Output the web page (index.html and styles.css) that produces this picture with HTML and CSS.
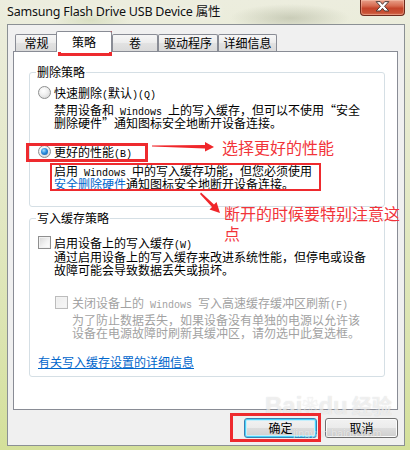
FILE: index.html
```html
<!DOCTYPE html>
<html lang="zh-CN">
<head>
<meta charset="utf-8">
<title>Samsung Flash Drive USB Device 属性</title>
<link rel="stylesheet" href="styles.css">
</head>
<body>
<div class="window">
  <div class="titlebar">
    <span class="title">Samsung Flash Drive USB Device 属性</span>
    <span class="close"><svg width="45" height="15" viewBox="0 0 45 15"><path d="M16.5 2.5 h4.2 l2.3 2.8 l2.3 -2.8 h4.2 l-4.4 4.8 l4.4 4.8 h-4.2 l-2.3 -2.8 l-2.3 2.8 h-4.2 l4.4 -4.8 z" fill="#fff" stroke="#4a3a36" stroke-width="1"/></svg></span>
  </div>
  <div class="client">
    <div class="tabs">
      <div class="tab t1">常规</div>
      <div class="tab sel">策略</div>
      <div class="tab t3">卷</div>
      <div class="tab t4">驱动程序</div>
      <div class="tab t5">详细信息</div>
    </div>
    <div class="panel">
      <fieldset class="group g1">
        <legend>删除策略</legend>
        <div class="opt o1"><span class="radio"></span><span class="lbl">快速删除<span class="m">(</span>默认<span class="m">)(Q)</span></span></div>
        <div class="desc d1">
          <div class="ln">禁用设备和<span class="m"> Windows </span>上的写入缓存，但可以不使用“安全</div>
          <div class="ln">删除硬件”通知图标安全地断开设备连接。</div>
        </div>
        <div class="opt o2"><span class="radio on"></span><span class="lbl">更好的性能<span class="m">(B)</span></span></div>
        <div class="desc d2">
          <div class="ln">启用<span class="m"> Windows </span>中的写入缓存功能，但您必须使用</div>
          <div class="ln"><a class="link">安全删除硬件</a>通知图标安全地断开设备连接。</div>
        </div>
      </fieldset>
      <fieldset class="group g2">
        <legend>写入缓存策略</legend>
        <div class="opt c1"><span class="check"></span><span class="lbl">启用设备上的写入缓存<span class="m">(W)</span></span></div>
        <div class="desc d3">
          <div class="ln">通过启用设备上的写入缓存来改进系统性能，但停电或设备</div>
          <div class="ln">故障可能会导致数据丢失或损坏。</div>
        </div>
        <div class="opt c2 disabled"><span class="check"></span><span class="lbl">关闭设备上的<span class="m"> Windows </span>写入高速缓存缓冲区刷新<span class="m">(F)</span></span></div>
        <div class="desc d4 disabled">
          <div class="ln">为了防止数据丢失，如果设备没有单独的电源以允许该</div>
          <div class="ln">设备在电源故障时刷新其缓冲区，请勿选中此复选框。</div>
        </div>
        <div class="ln more"><a class="link">有关写入缓存设置的详细信息</a></div>
      </fieldset>
    </div>
    <div class="buttons">
      <div class="btn default">确定</div>
      <div class="btn">取消</div>
    </div>
  </div>

  <div class="watermark"><span class="wm-big">Bai<span class="paw">❀</span>du<span class="wm-cn">经验</span></span><span class="wm-small">jingyan.baidu.com</span></div>

  <div class="mark box-tab"></div>
  <div class="mark box-radio"></div>
  <div class="mark box-desc"></div>
  <div class="mark box-ok"></div>
  <svg class="arrows" width="410" height="450" viewBox="0 0 410 450">
    <polygon points="152,145.6 205,145 205,142 214,147 205,151.5 205,148.5 152,146.6" fill="#f0262a"/>
    <polygon points="201,192.5 214,204.5 216.5,202 220,213 209.5,209.5 212,207 200,194" fill="#f0262a"/>
  </svg>
  <div class="note n1">选择更好的性能</div>
  <div class="note n2">断开的时候要特别注意这<br>点</div>
</div>
</body>
</html>
```
FILE: styles.css
```css
* { box-sizing: border-box; }
html, body { margin: 0; padding: 0; }
body {
  width: 410px;
  height: 450px;
  overflow: hidden;
  font-family: "Noto Sans CJK SC", sans-serif;
  font-size: 12px;
  color: #000;
  background:
    radial-gradient(ellipse 60px 14px at 290px 18px, rgba(160,165,140,0.45), rgba(160,165,140,0) 100%),
    radial-gradient(ellipse 40px 12px at 90px 20px, rgba(200,210,170,0.5), rgba(200,210,170,0) 100%),
    linear-gradient(to bottom, #ecedde 0%, #e4e9c8 40%, #dbe4b0 75%, #d4e09a 100%);
}
.window {
  position: relative;
  width: 410px;
  height: 450px;
  display: flex;
  flex-direction: column;
}
.titlebar {
  height: 24px;
  display: flex;
  justify-content: space-between;
  align-items: flex-start;
  padding-left: 7px;
  padding-right: 5px;
}
.title {
  font-family: "Noto Sans", "Noto Sans CJK SC", sans-serif;
  font-size: 12.5px;
  letter-spacing: -0.2px;
  line-height: 23px;
  color: #111;
  text-shadow: 0 0 6px rgba(255,255,255,0.9);
}
.close {
  width: 45px;
  height: 16px;
  display: flex;
  border: 1px solid #6e2a1c;
  border-top: none;
  border-radius: 0 0 4px 4px;
  background: linear-gradient(to bottom, #e9a08a 0%, #d66a50 40%, #c4442b 55%, #c95236 85%, #d8765a 100%);
  box-shadow: inset 0 0 0 1px rgba(255,220,200,0.35);
}
.close svg { display: block; margin-top: -1px; margin-left: -1px; }

.client {
  margin: 0 5px 0 7px;
  height: 422px;
  border: 1px solid #8b9094;
  background: #f0f0f0;
  display: flex;
  flex-direction: column;
  padding: 6px 6px 0 5px;
}
.tabs {
  display: flex;
  align-items: flex-end;
  height: 20px;
  margin-left: 2px;
  position: relative;
  z-index: 2;
}
.tab {
  height: 17px;
  border: 1px solid #898c95;
  border-bottom: none;
  border-radius: 2px 2px 0 0;
  background: linear-gradient(to bottom, #f6f6f6 0%, #ececec 50%, #e2e2e2 51%, #dadada 100%);
  text-align: center;
  line-height: 16px;
  font-size: 12px;
}
.t1 { width: 43px; }
.sel {
  width: 56px;
  height: 21px;
  margin-left: -2px;
  margin-bottom: -1px;
  background: #fff;
  line-height: 19px;
  position: relative;
  z-index: 3;
}
.t3 { width: 46px; }
.t4 { width: 60px; }
.t5 { width: 59px; }

.panel {
  height: 359px;
  border: 1px solid #898c95;
  background: #fff;
  padding: 0 12px 0 15px;
}
.group {
  margin: 13px 0 0;
  padding: 0 0 16px 0;
  border: 1px solid #d5dfe5;
  border-radius: 3px;
  min-width: 0;
}
.group legend {
  margin-left: 6px;
  padding: 0 1px;
  height: 14px;
  line-height: 14px;
  font-size: 12px;
}
.g2 { margin-top: 4px; padding-bottom: 8px; }

.opt {
  display: flex;
  align-items: center;
  height: 13px;
  padding-left: 8px;
  gap: 3px;
  white-space: nowrap;
}
.lbl { display: block; height: 13px; line-height: 13px; }
.desc { padding-left: 24px; }
.ln {
  height: 13px;
  line-height: 13px;
  white-space: nowrap;
}
.m {
  font-family: "Liberation Mono", monospace;
  font-size: 10px;
  line-height: 10px;
}
.o1 { margin-top: 7px; }
.d1 { margin-top: 4px; }
.o2 { margin-top: 16px; }
.d2 { margin-top: 6px; }
.c1 { margin-top: 11px; }
.d3 { margin-top: 1px; }
.c2 { margin-top: 20px; padding-left: 25px; gap: 4px; }
.d4 { margin-top: 4px; padding-left: 42px; }
.more { margin-top: 16px; padding-left: 8px; }

.disabled { color: #a2a2a2; }
.link { color: #0066cc; text-decoration: underline; }

.radio {
  width: 13px;
  height: 13px;
  flex: none;
  border-radius: 50%;
  border: 1px solid #8e8f8f;
  background: radial-gradient(circle at 40% 35%, #ffffff 0%, #f1f1f1 40%, #cfcfcf 100%);
  display: flex;
  align-items: center;
  justify-content: center;
}
.radio.on::after {
  content: "";
  width: 7px;
  height: 7px;
  border-radius: 50%;
  background: radial-gradient(circle at 40% 35%, #a8e0ff 0%, #2c8ddb 45%, #10569e 100%);
}
.check {
  width: 13px;
  height: 13px;
  flex: none;
  border: 1px solid #8f8f8f;
  background: linear-gradient(135deg, #d6d6d6 0%, #f4f4f4 60%, #ffffff 100%);
  box-shadow: inset 0 0 0 1px #f2f2f2;
}
.c2 .check {
  border-color: #bcbcbc;
  background: linear-gradient(135deg, #ececec 0%, #f7f7f7 100%);
}

.buttons {
  display: flex;
  justify-content: flex-end;
  gap: 8px;
  margin-top: 8px;
}
.btn {
  width: 73px;
  height: 20px;
  border: 1px solid #707070;
  border-radius: 3px;
  background: linear-gradient(to bottom, #f2f2f2 0%, #ebebeb 50%, #dddddd 51%, #cfcfcf 100%);
  box-shadow: inset 0 0 0 1px #fcfcfc;
  text-align: center;
  line-height: 18px;
  font-size: 12px;
}
.btn.default {
  border-color: #3c7fb1;
  box-shadow: inset 0 0 0 1px #48d3fb, inset 0 0 0 2px #c4effc;
}

.watermark {
  position: absolute;
  left: 265px;
  top: 393px;
  display: flex;
  flex-direction: column;
  align-items: flex-start;
  pointer-events: none;
  white-space: nowrap;
  color: rgba(255,255,255,0.6);
  text-shadow: 0 0 1px rgba(120,120,120,0.3);
}
.wm-big {
  font-family: "Liberation Sans", "Noto Sans CJK SC", sans-serif;
  font-size: 24px;
  font-weight: bold;
  line-height: 26px;
}
.paw { font-size: 16px; vertical-align: top; }
.wm-cn { font-family: "Noto Sans CJK SC", sans-serif; font-size: 20px; margin-left: 4px; }
.wm-small {
  margin-left: 28px;
  margin-top: 8px;
  font-family: "Liberation Sans", sans-serif;
  font-size: 11px;
  line-height: 12px;
}

.mark {
  position: absolute;
  border: 3px solid #ee2a2e;
  pointer-events: none;
}
.box-tab { left: 58px; top: 31px; width: 54px; height: 25px; }
.box-radio { left: 26px; top: 143px; width: 122px; height: 19px; }
.box-desc { left: 50px; top: 163px; width: 271px; height: 28px; border-width: 2px; }
.box-ok { left: 230px; top: 413px; width: 91px; height: 29px; }
.arrows { position: absolute; left: 0; top: 0; pointer-events: none; }
.note {
  position: absolute;
  color: #f2343a;
  font-size: 16px;
  line-height: 20px;
  white-space: nowrap;
}
.n1 { left: 222px; top: 137px; }
.n2 { left: 224px; top: 203px; }
```
